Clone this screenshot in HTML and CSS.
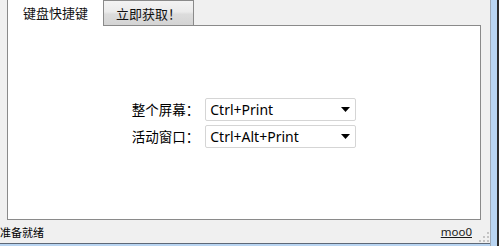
FILE: index.html
```html
<!DOCTYPE html>
<html lang="zh-CN">
<head>
    <meta charset="UTF-8">
    <title>键盘快捷键</title>
    <link rel="stylesheet" href="styles.css">
</head>
<body>
    <div class="window">
        <div class="client">
            <div class="tabs">
                <div class="tab active">键盘快捷键</div>
                <div class="tab">立即获取！</div>
                <div class="tab-rest"></div>
            </div>

            <div class="panel">
                <div class="hotkeys">
                    <label>整个屏幕：</label>
                    <div class="combo">
                        <span>Ctrl+Print</span>
                        <svg width="9" height="5" viewBox="0 0 9 5"><path d="M0 0h9L4.5 5z" fill="#000"/></svg>
                    </div>

                    <label>活动窗口：</label>
                    <div class="combo">
                        <span>Ctrl+Alt+Print</span>
                        <svg width="9" height="5" viewBox="0 0 9 5"><path d="M0 0h9L4.5 5z" fill="#000"/></svg>
                    </div>
                </div>
            </div>

            <div class="status">
                <span class="status-text">准备就绪</span>
                <a class="link" href="#">moo0</a>
                <svg class="grip" width="10" height="10" viewBox="0 0 10 10">
                    <rect x="8" y="0" width="2" height="2" fill="#c4c4c4"/>
                    <rect x="4" y="4" width="2" height="2" fill="#c4c4c4"/>
                    <rect x="8" y="4" width="2" height="2" fill="#c4c4c4"/>
                    <rect x="0" y="8" width="2" height="2" fill="#c4c4c4"/>
                    <rect x="4" y="8" width="2" height="2" fill="#c4c4c4"/>
                    <rect x="8" y="8" width="2" height="2" fill="#c4c4c4"/>
                </svg>
            </div>
        </div>
        <div class="frame"></div>
    </div>
</body>
</html>
```

FILE: styles.css
```css
body {
    margin: 0;
    padding: 0;
    font-family: "Noto Sans CJK SC", "Noto Sans", sans-serif;
    background-color: #b9d5f2;
    color: #000;
    overflow: hidden;
}

.window {
    display: flex;
    width: 499px;
    height: 246px;
}

.client {
    width: 474px;
    height: 243px;
    display: flex;
    flex-direction: column;
    padding: 0 9px 0 7px;
    background-color: #f0f0f0;
    border-bottom: 1px solid #5d6877;
}

.frame {
    width: 6px;
    height: 246px;
    border-left: 1px solid #9ea9b6;
    border-right: 2px solid #2c2c2c;
    background-color: #b9d5f2;
}

/* tabs */
.tabs {
    display: flex;
    align-items: flex-end;
    height: 26px;
}

.tab {
    width: 89px;
    height: 24px;
    border: 1px solid #8a8a8a;
    background: linear-gradient(#f3f3f3 0%, #ebebeb 45%, #dcdcdc 55%, #d4d4d4 100%);
    font-size: 13px;
    line-height: 25px;
    text-align: center;
    color: #111;
}

.tab.active {
    width: 95px;
    height: 26px;
    border: none;
    border-left: 1px solid #8a8a8a;
    background: #fff;
    line-height: 26px;
}

.tab-rest {
    flex: 1;
    border-bottom: 1px solid #8a8a8a;
}

/* panel */
.panel {
    height: 193px;
    background-color: #fff;
    border: 1px solid #8a8a8a;
    border-top: none;
    display: flex;
    align-items: center;
    justify-content: center;
}

.hotkeys {
    display: grid;
    grid-template-columns: auto 151px;
    column-gap: 6px;
    row-gap: 4px;
    align-items: center;
}

.hotkeys label {
    font-size: 13.5px;
    text-align: right;
}

.combo {
    height: 21px;
    border: 1px solid #d5d5d5;
    border-radius: 2px;
    display: flex;
    align-items: center;
    justify-content: space-between;
    padding: 0 5px 0 4px;
    font-family: "Noto Sans", sans-serif;
    font-size: 14px;
}

/* status bar */
.status {
    height: 23px;
    display: flex;
    align-items: center;
    margin-left: -7px;
    margin-right: -8px;
    font-size: 11px;
}

.status-text {
    flex: 1;
    padding-top: 1px;
}

.link {
    color: #1a1a1a;
    font-family: "Noto Sans", sans-serif;
    font-size: 11.5px;
    margin-right: 7px;
}

.grip {
    align-self: flex-end;
    margin-bottom: 1px;
}
```
